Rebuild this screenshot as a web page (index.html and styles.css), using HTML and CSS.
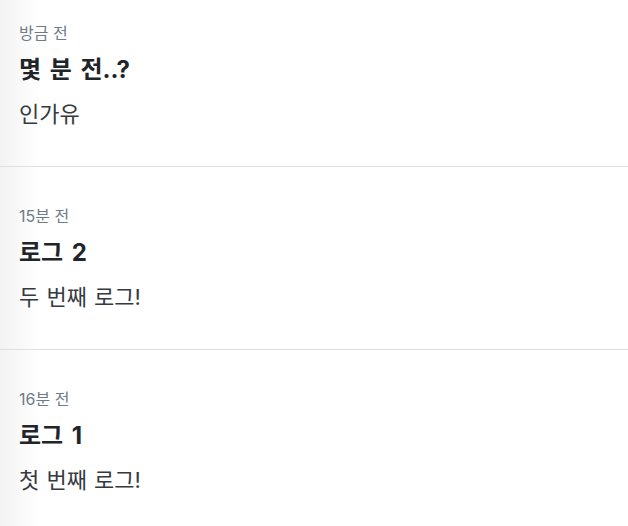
FILE: index.html
```html
<!DOCTYPE html>
<html lang="ko">
<head>
<meta charset="utf-8">
<link rel="stylesheet" href="styles.css">
</head>
<body>
<ul class="log-list">
  <li class="log-item first">
    <div class="log-time">방금 전</div>
    <div class="log-title">몇 분 전..?</div>
    <div class="log-body">인가유</div>
  </li>
  <li class="log-item">
    <div class="log-time">15분 전</div>
    <div class="log-title">로그 2</div>
    <div class="log-body">두 번째 로그!</div>
  </li>
  <li class="log-item">
    <div class="log-time">16분 전</div>
    <div class="log-title">로그 1</div>
    <div class="log-body">첫 번째 로그!</div>
  </li>
</ul>
</body>
</html>
```

FILE: styles.css
```css
html, body {
  margin: 0;
  padding: 0;
  height: 100%;
}
body {
  background: linear-gradient(to right, #f2f2f2 0px, #f9f9f9 20px, #ffffff 40px);
  font-family: "Inter", "Noto Sans CJK KR", sans-serif;
}
.log-list {
  list-style: none;
  margin: 0;
  padding: 0;
}
.log-item {
  padding: 38px 19px 37px;
  border-bottom: 1px solid #e0e0e0;
}
.log-item.first {
  padding-top: 22px;
}
.log-time {
  font-size: 16px;
  line-height: 22px;
  color: #6e7b88;
}
.log-title {
  margin-top: 10px;
  font-size: 24px;
  line-height: 32px;
  font-weight: 700;
  word-spacing: 3px;
  color: #212529;
}
.log-body {
  margin-top: 13px;
  font-size: 22px;
  line-height: 30px;
  word-spacing: 1px;
  color: #343a40;
}
```
